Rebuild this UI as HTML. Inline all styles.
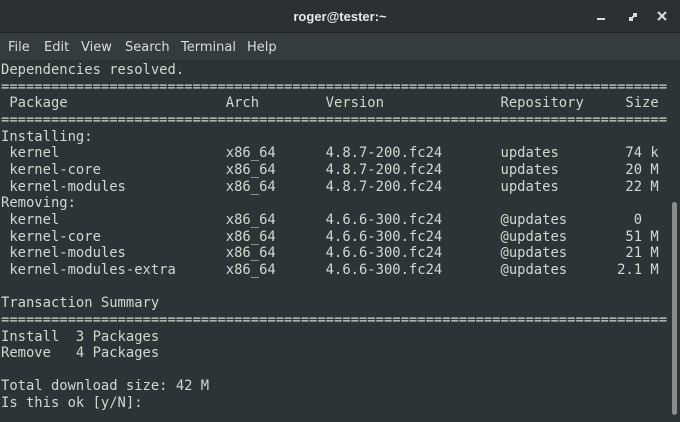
<!DOCTYPE html>
<html><head><meta charset="utf-8"><style>
html,body{margin:0;padding:0;width:680px;height:422px;overflow:hidden;background:#2e3436}
.title{position:absolute;left:0;top:0;width:680px;height:33px;background:#2d2f30;border-bottom:1px solid #222;box-sizing:border-box;border-radius:5px 5px 0 0}
.title .t{position:absolute;left:0;width:680px;top:9px;text-align:center;color:#e8e8e7;font:bold 13px "Liberation Sans","DejaVu Sans",sans-serif}
.menu{position:absolute;left:0;top:33px;width:680px;height:27px;background:#363b3c;color:#dcdcdc;font:13px "DejaVu Sans","Liberation Sans",sans-serif}
.menu span{position:absolute;top:7px}
pre{position:absolute;left:1px;top:62px;margin:0;color:#d3d7cf;font-family:"DejaVu Sans Mono","Liberation Mono",monospace;font-size:13.84px;line-height:16.65px}
.sb{position:absolute;left:672px;top:202px;width:5px;height:213px;background:#8a8d8c;border-radius:3px}
</style></head><body>
<div class="title"><div class="t">roger@tester:~</div>
<div style="position:absolute;left:597px;top:18px;width:8px;height:2px;background:#ddd"></div>
<svg style="position:absolute;left:627px;top:11px" width="12" height="12" viewBox="0 0 12 12"><path d="M3 9L9 3M6 3h3v3M3 6v3h3" stroke="#ddd" stroke-width="2" fill="none"/></svg>
<svg style="position:absolute;left:657px;top:11px" width="10" height="10" viewBox="0 0 10 10"><path d="M1 1L9 9M9 1L1 9" stroke="#ddd" stroke-width="2"/></svg>
</div>
<div class="menu"><span style="left:8px">File</span><span style="left:44px">Edit</span><span style="left:81px">View</span><span style="left:125px">Search</span><span style="left:181px">Terminal</span><span style="left:247px">Help</span></div>
<pre>Dependencies resolved.
================================================================================
 Package                   Arch        Version              Repository     Size
================================================================================
Installing:
 kernel                    x86_64      4.8.7-200.fc24       updates        74 k
 kernel-core               x86_64      4.8.7-200.fc24       updates        20 M
 kernel-modules            x86_64      4.8.7-200.fc24       updates        22 M
Removing:
 kernel                    x86_64      4.6.6-300.fc24       @updates        0
 kernel-core               x86_64      4.6.6-300.fc24       @updates       51 M
 kernel-modules            x86_64      4.6.6-300.fc24       @updates       21 M
 kernel-modules-extra      x86_64      4.6.6-300.fc24       @updates      2.1 M

Transaction Summary
================================================================================
Install  3 Packages
Remove   4 Packages

Total download size: 42 M
Is this ok [y/N]:</pre>
<div class="sb"></div>
</body></html>
